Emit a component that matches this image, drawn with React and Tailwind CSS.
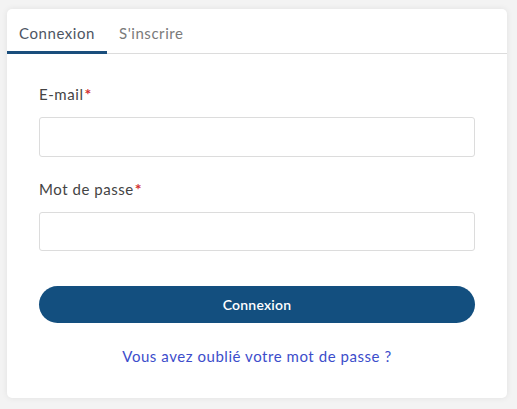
export default function App() {
  return (
    <div className="min-h-[409px] w-[517px] bg-[#f3f3f3] pt-[9px] pl-[7px]" style={{ fontFamily: "Lato, 'Noto Sans', sans-serif" }}>
      <div className="w-[500px] h-[389px] bg-white rounded-[5px] shadow-[0_0_6px_rgba(0,0,0,0.08)] tracking-[0.55px]">
        <div className="flex border-b border-[#dcdcdc] h-[45px] items-stretch">
          <div className="w-[100px] flex items-center justify-center text-[15px] text-[#4d5563] border-b-[3px] border-[#1a4e7c] -mb-px pt-[6px]">Connexion</div>
          <div className="pl-[12px] flex items-center text-[15px] text-[#7a7a7a] pt-[4px]">S'inscrire</div>
        </div>
        <div className="px-[32px] pt-[30px]">
          <div className="text-[15px] text-[#444] leading-[20px]">E-mail<span className="text-[#d32f2f] font-bold text-[16px] ml-[1px]">*</span></div>
          <input className="mt-[13px] w-[436px] h-[40px] border border-[#dcdcdc] rounded-[3px] block" />
          <div className="mt-[22px] text-[15px] text-[#444] leading-[20px]">Mot de passe<span className="text-[#d32f2f] font-bold text-[16px] ml-[1px]">*</span></div>
          <input className="mt-[13px] w-[436px] h-[39px] border border-[#dcdcdc] rounded-[3px] block" />
          <button className="mt-[35px] w-[436px] h-[37px] rounded-full bg-[#134f7f] text-white text-[14px] tracking-[0.2px] font-semibold block">Connexion</button>
          <div className="mt-[23px] text-center text-[15px] text-[#3c4dcb] leading-[20px]">Vous avez oublié votre mot de passe ?</div>
        </div>
      </div>
    </div>
  );
}
